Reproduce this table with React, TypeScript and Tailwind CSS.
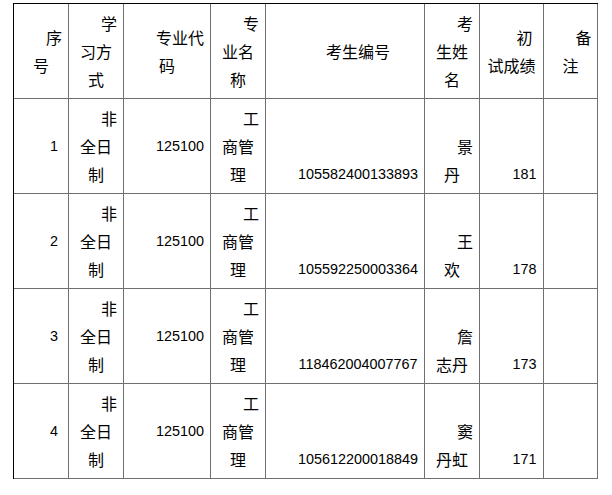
import React from "react";

type CellProps = {
  lines?: string[];
  bottom?: boolean;
  mono?: boolean;
};

function Cell({ lines = [], bottom = false, mono = false }: CellProps) {
  return (
    <div
      className={
        bottom
          ? "flex flex-col justify-end h-[95px] px-[5px] pb-[5px] border-r border-b border-[#707070]"
          : "flex flex-col justify-center h-[95px] px-[5px] border-r border-b border-[#707070]"
      }
    >
      <div
        className={
          mono
            ? "text-center whitespace-nowrap leading-[28px] indent-[26px] font-['Liberation_Sans',Arial,sans-serif] text-[14.4px] text-black"
            : "text-center whitespace-nowrap leading-[28px] indent-[26px] text-[16px] text-black"
        }
      >
        {lines.map((l, i) => (
          <React.Fragment key={i}>
            {i > 0 && <br />}
            {l}
          </React.Fragment>
        ))}
      </div>
    </div>
  );
}

const rows = [
  { no: "1", id: "105582400133893", name: ["景", "丹"], score: "181" },
  { no: "2", id: "105592250003364", name: ["王", "欢"], score: "178" },
  { no: "3", id: "118462004007767", name: ["詹", "志丹"], score: "173" },
  { no: "4", id: "105612200018849", name: ["窦", "丹虹"], score: "171" },
];

export default function App() {
  return (
    <div className="w-[612px] h-[495px] bg-white overflow-hidden font-['Noto_Sans_CJK_SC','Noto_Sans_CJK_JP',sans-serif]">
      <div className="ml-[13px] mt-[3px] w-fit grid grid-cols-[55px_55px_87px_55px_159px_55px_64px_54px] border-l border-t border-black">
        <Cell lines={["序", "号"]} />
        <Cell lines={["学", "习方", "式"]} />
        <Cell lines={["专业代", "码"]} />
        <Cell lines={["专", "业名", "称"]} />
        <Cell lines={["考生编号"]} />
        <Cell lines={["考", "生姓", "名"]} />
        <Cell lines={["初", "试成绩"]} />
        <Cell lines={["备", "注"]} />
        {rows.map((r) => (
          <React.Fragment key={r.no}>
            <Cell lines={[r.no]} mono />
            <Cell lines={["非", "全日", "制"]} />
            <Cell lines={["125100"]} mono />
            <Cell lines={["工", "商管", "理"]} />
            <Cell lines={[r.id]} mono bottom />
            <Cell lines={r.name} bottom />
            <Cell lines={[r.score]} mono bottom />
            <Cell lines={[]} />
          </React.Fragment>
        ))}
      </div>
    </div>
  );
}
